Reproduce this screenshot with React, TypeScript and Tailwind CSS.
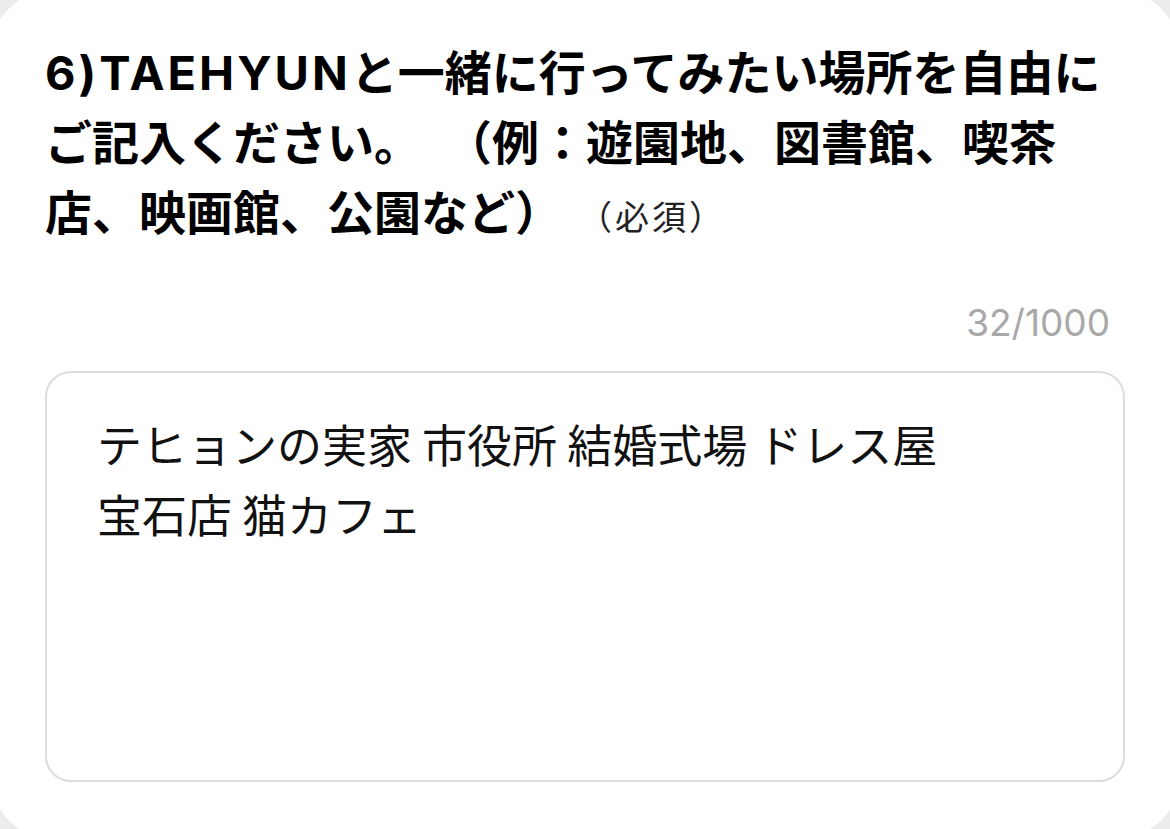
export default function App() {
  return (
    <div className="h-[829px] w-[1170px] overflow-hidden bg-[#ececef]">
      <div
        className="-ml-[10px] -mt-[10px] h-[849px] w-[1190px] rounded-[64px] bg-white pl-[55px] pr-[55px] pt-[45px] [text-spacing-trim:space-all]"
        style={{ fontFamily: '"Noto Sans CJK JP", "Noto Sans", sans-serif' }}
      >
        {/* Question */}
        <h2 className="whitespace-nowrap text-[47px] font-bold leading-[70px] text-black">
          <span
            className="leading-none tracking-[3px]"
            style={{ fontFamily: 'Inter, "Noto Sans CJK JP", sans-serif' }}
          >
            6)TAEHYUN
          </span>
          と一緒に行ってみたい場所を自由に
          <br />
          ご記入ください。
          <span className="inline-block w-[24px]" />
          （例：遊園地、図書館、喫茶
          <br />
          店、映画館、公園など）
          <span className="ml-[16px] text-[34px] font-normal leading-none tracking-[3px] text-[#222]">（必須）</span>
        </h2>

        {/* Counter */}
        <div
          className="mt-[58px] pr-[15px] text-right text-[37px] leading-[40px] text-[#a8a8a8]"
          style={{ fontFamily: 'Inter, "Liberation Sans", sans-serif' }}
        >
          32/1000
        </div>

        {/* Answer box */}
        <div className="mt-[28px] h-[411px] w-[1080px] rounded-[26px] border-2 border-[#dcdce1] pl-[50px] pt-[36px]">
          <p className="whitespace-nowrap text-[45px] leading-[70px] text-[#111]">
            テヒョンの実家 市役所 結婚式場 ドレス屋
            <br />
            宝石店 猫カフェ
          </p>
        </div>
      </div>
    </div>
  );
}
